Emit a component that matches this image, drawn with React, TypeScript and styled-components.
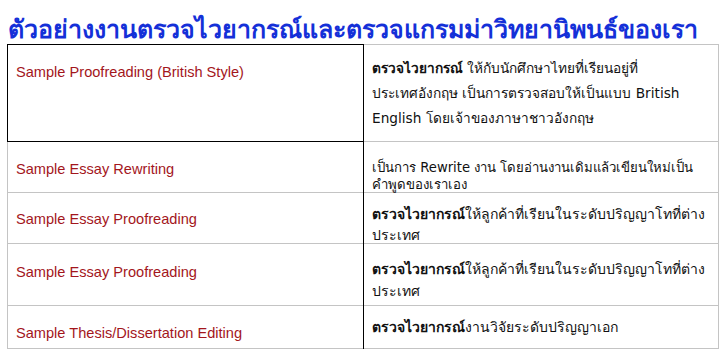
import React from "react";
import styled, { createGlobalStyle } from "styled-components";

const GlobalStyle = createGlobalStyle`
  html, body {
    margin: 0;
    padding: 0;
    background: #ffffff;
  }
  body {
    font-family: Tahoma, "DejaVu Sans", "Noto Sans", sans-serif;
  }
`;

const Page = styled.div`
  width: 727px;
  height: 359px;
  overflow: hidden;
  padding: 16px 0 0 7px;
  box-sizing: border-box;
`;

const Title = styled.h2`
  margin: 0 0 0 1px;
  height: 28px;
  font-family: Tahoma, "DejaVu Sans", "Noto Sans", sans-serif;
  font-size: 25px;
  line-height: 28px;
  font-weight: bold;
  color: #1430d8;
  white-space: nowrap;
`;

const Table = styled.table`
  width: 712px;
  table-layout: fixed;
  border-collapse: collapse;
  border: 1px solid #c4c4c4;
`;

const NameCol = styled.col`
  width: 356px;
`;

const Row = styled.tr`
  border-top: 1px solid #c4c4c4;
`;

const NameCell = styled.td<{ $focused?: boolean }>`
  padding: 0;
  vertical-align: top;
  border-right: 1px solid #000;
  ${(p) => (p.$focused ? "border: 1px solid #000;" : "")}
  font-family: "Liberation Sans", Arial, sans-serif;
  color: #a3161c;
`;

const DescCell = styled.td`
  padding: 0;
  vertical-align: top;
  font-family: Tahoma, "DejaVu Sans", "Noto Sans", sans-serif;
  color: #111;
`;

const CellBox = styled.div<{ $h: number; $top: number; $lh: number; $size: number }>`
  box-sizing: border-box;
  height: ${(p) => p.$h}px;
  padding: ${(p) => p.$top}px 8px 0;
  font-size: ${(p) => p.$size}px;
  line-height: ${(p) => p.$lh}px;
  white-space: nowrap;
`;

type Item = {
  name: string;
  bold: string;
  lines: string[];
  descSize: number;
  height: number;
  nameTop: number;
  descTop: number;
  lh: number;
  focused?: boolean;
};

const items: Item[] = [
  {
    name: "Sample Proofreading (British Style)",
    bold: "ตรวจไวยากรณ์",
    lines: [
      " ให้กับนักศึกษาไทยที่เรียนอยู่ที่",
      "ประเทศอังกฤษ เป็นการตรวจสอบให้เป็นแบบ British",
      "English โดยเจ้าของภาษาชาวอังกฤษ",
    ],
    descSize: 13.7,
    height: 96,
    nameTop: 18,
    descTop: 11,
    lh: 25,
    focused: true,
  },
  {
    name: "Sample Essay Rewriting",
    bold: "",
    lines: [
      "เป็นการ Rewrite งาน โดยอ่านงานเดิมแล้วเขียนใหม่เป็น",
      "คำพูดของเราเอง",
    ],
    descSize: 13.2,
    height: 50,
    nameTop: 18,
    descTop: 17,
    lh: 17,
  },
  {
    name: "Sample Essay Proofreading",
    bold: "ตรวจไวยากรณ์",
    lines: ["ให้ลูกค้าที่เรียนในระดับปริญญาโทที่ต่าง", "ประเทศ"],
    descSize: 14,
    height: 50,
    nameTop: 17,
    descTop: 11,
    lh: 21,
  },
  {
    name: "Sample Essay Proofreading",
    bold: "ตรวจไวยากรณ์",
    lines: ["ให้ลูกค้าที่เรียนในระดับปริญญาโทที่ต่าง", "ประเทศ"],
    descSize: 14,
    height: 61,
    nameTop: 19,
    descTop: 14,
    lh: 22,
  },
  {
    name: "Sample Thesis/Dissertation Editing",
    bold: "ตรวจไวยากรณ์",
    lines: ["งานวิจัยระดับปริญญาเอก"],
    descSize: 14,
    height: 42,
    nameTop: 18,
    descTop: 12,
    lh: 18,
  },
];

export default function App() {
  return (
    <Page>
      <GlobalStyle />
      <Title>ตัวอย่างงานตรวจไวยากรณ์และตรวจแกรมม่าวิทยานิพนธ์ของเรา</Title>
      <Table>
        <colgroup>
          <NameCol />
          <col />
        </colgroup>
        <tbody>
          {items.map((it, i) => (
            <Row key={i}>
              <NameCell $focused={it.focused}>
                <CellBox $h={it.height} $top={it.nameTop} $lh={18} $size={14.6}>
                  {it.name}
                </CellBox>
              </NameCell>
              <DescCell>
                <CellBox $h={it.height} $top={it.descTop} $lh={it.lh} $size={it.descSize}>
                  {it.lines.map((line, j) => (
                    <React.Fragment key={j}>
                      {j === 0 && it.bold && <b>{it.bold}</b>}
                      {line}
                      {j < it.lines.length - 1 && <br />}
                    </React.Fragment>
                  ))}
                </CellBox>
              </DescCell>
            </Row>
          ))}
        </tbody>
      </Table>
    </Page>
  );
}
